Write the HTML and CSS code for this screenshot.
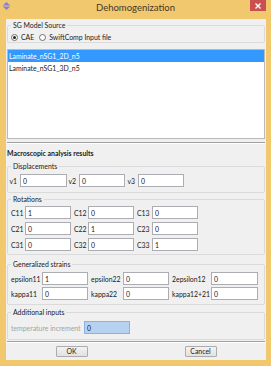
FILE: index.html
```html
<!DOCTYPE html>
<html lang="en">
<head>
  <meta charset="UTF-8">
  <title>Dehomogenization</title>
  <link rel="stylesheet" href="styles.css">
</head>
<body>
  <div class="window">
    <div class="titlebar">
      <svg class="app-icon" viewBox="0 0 9 9">
        <polygon points="4.5,0 8.7,3.8 0.3,3.8" fill="#8a7fd6"/>
        <polygon points="0.3,5.2 8.7,5.2 4.5,9" fill="#8a7fd6"/>
      </svg>
      <span class="title">Dehomogenization</span>
      <span class="close">
        <svg viewBox="0 0 6 6" width="6" height="6">
          <path d="M0.5 0.5 L5.5 5.5 M5.5 0.5 L0.5 5.5" stroke="#fff" stroke-width="1.4"/>
        </svg>
      </span>
    </div>

    <div class="client">
      <fieldset class="group">
        <legend>SG Model Source</legend>
        <div class="radios">
          <label class="radio"><span class="dot checked"></span>CAE</label>
          <label class="radio"><span class="dot"></span>SwiftComp Input file</label>
        </div>
      </fieldset>

      <ul class="list">
        <li class="selected">Laminate_nSG1_2D_n5</li>
        <li>Laminate_nSG1_3D_n5</li>
      </ul>

      <div class="separator"></div>
      <div class="section-title">Macroscopic analysis results</div>

      <fieldset class="group displacements">
        <legend>Displacements</legend>
        <div class="grid disp-grid">
          <label>v1</label><input type="text" value="0">
          <label>v2</label><input type="text" value="0">
          <label>v3</label><input type="text" value="0">
        </div>
      </fieldset>

      <fieldset class="group rotations">
        <legend>Rotations</legend>
        <div class="grid rot-grid">
          <label>C11</label><input type="text" value="1">
          <label>C12</label><input type="text" value="0">
          <label>C13</label><input type="text" value="0">
          <label>C21</label><input type="text" value="0">
          <label>C22</label><input type="text" value="1">
          <label>C23</label><input type="text" value="0">
          <label>C31</label><input type="text" value="0">
          <label>C32</label><input type="text" value="0">
          <label>C33</label><input type="text" value="1">
        </div>
      </fieldset>

      <fieldset class="group strains">
        <legend>Generalized strains</legend>
        <div class="grid strain-grid">
          <label>epsilon11</label><input type="text" value="1">
          <label>epsilon22</label><input type="text" value="0">
          <label>2epsilon12</label><input type="text" value="0">
          <label>kappa11</label><input type="text" value="0">
          <label>kappa22</label><input type="text" value="0">
          <label>kappa12+21</label><input type="text" value="0">
        </div>
      </fieldset>

      <fieldset class="group additional">
        <legend>Additional inputs</legend>
        <div class="grid add-grid">
          <label class="disabled">temperature increment</label><input type="text" class="active" value="0">
        </div>
      </fieldset>

      <div class="separator bottom"></div>
      <div class="buttons">
        <button>OK</button>
        <button>Cancel</button>
      </div>
    </div>
  </div>
</body>
</html>
```

FILE: styles.css
```css
body {
  margin: 0;
  background-color: #f1c86d;
  font-family: Lato, "Noto Sans", sans-serif;
  font-size: 6.9px;
  color: #1a1a1a;
}

.window {
  width: 271px;
  height: 366px;
  display: flex;
  flex-direction: column;
}

.titlebar {
  height: 19px;
  display: grid;
  grid-template-columns: 1fr auto 1fr;
  align-items: start;
}

.app-icon {
  width: 9px;
  height: 8px;
  margin: 2px 0 0 2px;
}

.title {
  font-size: 9.5px;
  line-height: 15px;
  color: #45392a;
}

.close {
  justify-self: end;
  margin-right: 5px;
  width: 16px;
  height: 11px;
  background-color: #c9504f;
  display: flex;
  align-items: center;
  justify-content: center;
}

.client {
  flex: 1;
  margin: 0 5px 6px 6px;
  padding: 1px 1px 0 1px;
  background-color: #f0f0f0;
  display: flex;
  flex-direction: column;
}

fieldset.group {
  margin: 0;
  padding: 0;
  min-width: 0;
  border: 1px solid #dadada;
  border-radius: 2px;
}

legend {
  margin-left: 3px;
  padding: 0 2px;
  line-height: 10px;
}

.radios {
  display: flex;
  align-items: center;
  gap: 5px;
  height: 10px;
  padding: 2px 0 0 3px;
}

.radio {
  display: flex;
  align-items: center;
  gap: 3px;
}

.dot {
  width: 7px;
  height: 7px;
  box-sizing: border-box;
  border: 1px solid #6f6f6f;
  border-radius: 50%;
  background-color: #fff;
  display: flex;
  align-items: center;
  justify-content: center;
}

.dot.checked::after {
  content: "";
  width: 3px;
  height: 3px;
  border-radius: 50%;
  background-color: #222;
}

.list {
  margin: 6px 0 0 0;
  padding: 0;
  list-style: none;
  height: 90px;
  box-sizing: border-box;
  border: 1px solid #b9b9b9;
  background-color: #fff;
}

.list li {
  height: 12px;
  line-height: 12px;
  padding-left: 1px;
}

.list li.selected {
  background-color: #3399ff;
  color: #fff;
}

.separator {
  margin-top: 3px;
  border-top: 1px solid #a0a0a0;
  border-bottom: 1px solid #fff;
}

.section-title {
  margin-top: 4px;
  font-weight: bold;
  line-height: 10px;
}

.displacements {
  margin-top: 3px !important;
}

.rotations {
  margin-top: 1px !important;
}

.strains {
  margin-top: 4px !important;
}

.additional {
  margin-top: 2px !important;
}

.grid {
  display: grid;
  align-items: center;
}

.grid label {
  padding-left: 3px;
  white-space: nowrap;
}

.grid input {
  box-sizing: border-box;
  height: 13px;
  margin: 0;
  padding: 0 2px;
  border: 1px solid #abadb3;
  background-color: #fff;
  font-family: inherit;
  font-size: 6.9px;
  color: #1a1a1a;
  outline: none;
}

.disp-grid {
  grid-template-columns: 12px 47px 12px 46px 13px 46px;
  padding: 3px 0 5px 0;
}

.disp-grid label {
  padding-left: 0;
  padding-right: 3px;
  text-align: right;
}

.rot-grid {
  grid-template-columns: 17px 46px 17px 46px 18px 46px;
  row-gap: 3px;
  padding: 2px 0 3px 0;
}

.strain-grid {
  grid-template-columns: 34px 46px 35px 46px 42px 47px;
  row-gap: 2px;
  padding: 3px 0 4px 0;
}

.add-grid {
  grid-template-columns: 76px 46px;
  padding: 4px 0 5px 0;
}

.grid label.disabled {
  color: #a3a3a3;
}

.grid input.active {
  background-color: #b7d1f1;
  border-color: #8fb0dc;
}

.separator.bottom {
  margin-top: 1px;
}

.buttons {
  display: grid;
  grid-template-columns: 1fr 1fr;
  justify-items: center;
  margin-top: 3px;
}

.buttons button {
  width: 32px;
  height: 11px;
  padding: 0;
  border: 1px solid #acacac;
  border-radius: 1px;
  background: linear-gradient(#f2f2f2, #e2e2e2);
  font-family: inherit;
  font-size: 6.9px;
  line-height: 9px;
  color: #1a1a1a;
}
```
